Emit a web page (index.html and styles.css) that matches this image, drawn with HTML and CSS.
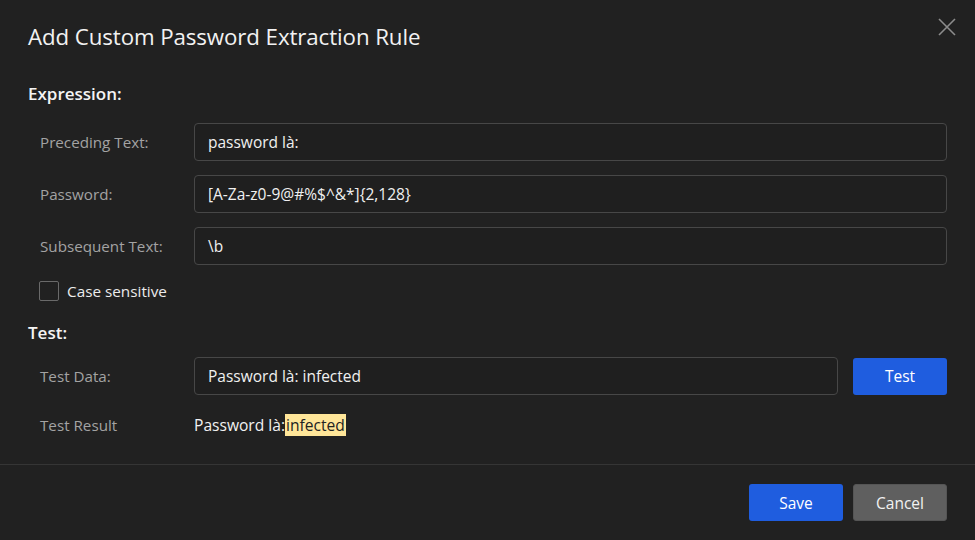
FILE: index.html
```html
<!DOCTYPE html>
<html>
<head>
<meta charset="utf-8">
<link rel="stylesheet" href="styles.css">
</head>
<body>
<div class="dialog">
  <div class="header">
    <div class="title">Add Custom Password Extraction Rule</div>
    <button class="close" aria-label="Close">
      <svg width="18" height="18" viewBox="0 0 18 18"><path d="M1 1 L17 17 M17 1 L1 17" stroke="#8c8c8c" stroke-width="1.6" fill="none"/></svg>
    </button>
  </div>
  <div class="body">
    <div class="section first">Expression:</div>
    <div class="rows">
      <div class="row"><span class="label">Preceding Text:</span><div class="input">password là:</div></div>
      <div class="row"><span class="label">Password:</span><div class="input">[A-Za-z0-9@#%$^&amp;*]{2,128}</div></div>
      <div class="row"><span class="label">Subsequent Text:</span><div class="input">\b</div></div>
    </div>
    <label class="check"><span class="box"></span><span>Case sensitive</span></label>
    <div class="section">Test:</div>
    <div class="row test-row"><span class="label">Test Data:</span><div class="input">Password là: infected</div><button class="btn primary test-btn">Test</button></div>
    <div class="row result-row"><span class="label">Test Result</span><span class="result">Password là:<mark>infected</mark></span></div>
  </div>
  <div class="footer">
    <button class="btn primary">Save</button>
    <button class="btn secondary">Cancel</button>
  </div>
</div>
</body>
</html>
```
FILE: styles.css
```css
* { box-sizing: border-box; }
html, body { margin: 0; padding: 0; }
body {
  background: #212121;
  color: #ececec;
  font-family: "Open Sans", "Noto Sans", sans-serif;
  width: 975px;
  height: 540px;
  overflow: hidden;
}
.dialog { display: flex; flex-direction: column; height: 540px; }
.header {
  height: 72px;
  display: flex;
  align-items: center;
  justify-content: space-between;
  padding: 0 18px 0 28px;
}
.title { font-size: 22.3px; color: #f2f2f2; letter-spacing: -0.1px; }
.close {
  background: none; border: 0; padding: 0; margin-top: -18px;
  width: 20px; height: 20px; display: flex; align-items: center; justify-content: center;
}
.body { padding: 0 28px 0 28px; }
.section {
  font-size: 17px; font-weight: 600; color: #f4f4f4;
  height: 24px; line-height: 24px;
  margin-top: 18px;
}
.section.first { margin-top: 10px; margin-bottom: 17px; }
.section + .row { margin-top: 12px; }
.rows { display: flex; flex-direction: column; gap: 14px; }
.row {
  display: flex; align-items: center; height: 38px; padding-left: 12px;
}
.label { width: 154px; flex: none; color: #a3a3a3; font-size: 15.2px; }
.input {
  flex: 1;
  height: 38px;
  border: 1px solid #474747;
  border-radius: 4px;
  background: #1f1f1f;
  padding: 0 13px;
  display: flex; align-items: center;
  font-size: 15.5px; color: #f0f0f0;
}
.check {
  display: flex; align-items: center; height: 24px; margin-top: 14px; padding-left: 11px;
  font-size: 15.3px; color: #ececec;
}
.box {
  width: 20px; height: 20px; border: 1px solid #6a6a6a; border-radius: 2px; margin-right: 8px;
}
.test-btn { margin-left: 15px; }
.btn {
  width: 94px; height: 37px; border: 1px solid transparent; border-radius: 3px;
  font-family: inherit; font-size: 15.5px; color: #fff; cursor: pointer;
}
.primary { background: #1f5ddf; }
.secondary { background: #5f5f5f; border-color: #555; color: #f2f2f2; }
.result-row { margin-top: 11px; }
.result { font-size: 15.6px; color: #f2f2f2; }
mark { background: #ffe699; color: #222; padding: 0 1px; }
.footer {
  margin-top: 20px;
  border-top: 1px solid #353535;
  display: flex; justify-content: flex-end; gap: 10px;
  padding: 19px 28px 0 0;
}
```
